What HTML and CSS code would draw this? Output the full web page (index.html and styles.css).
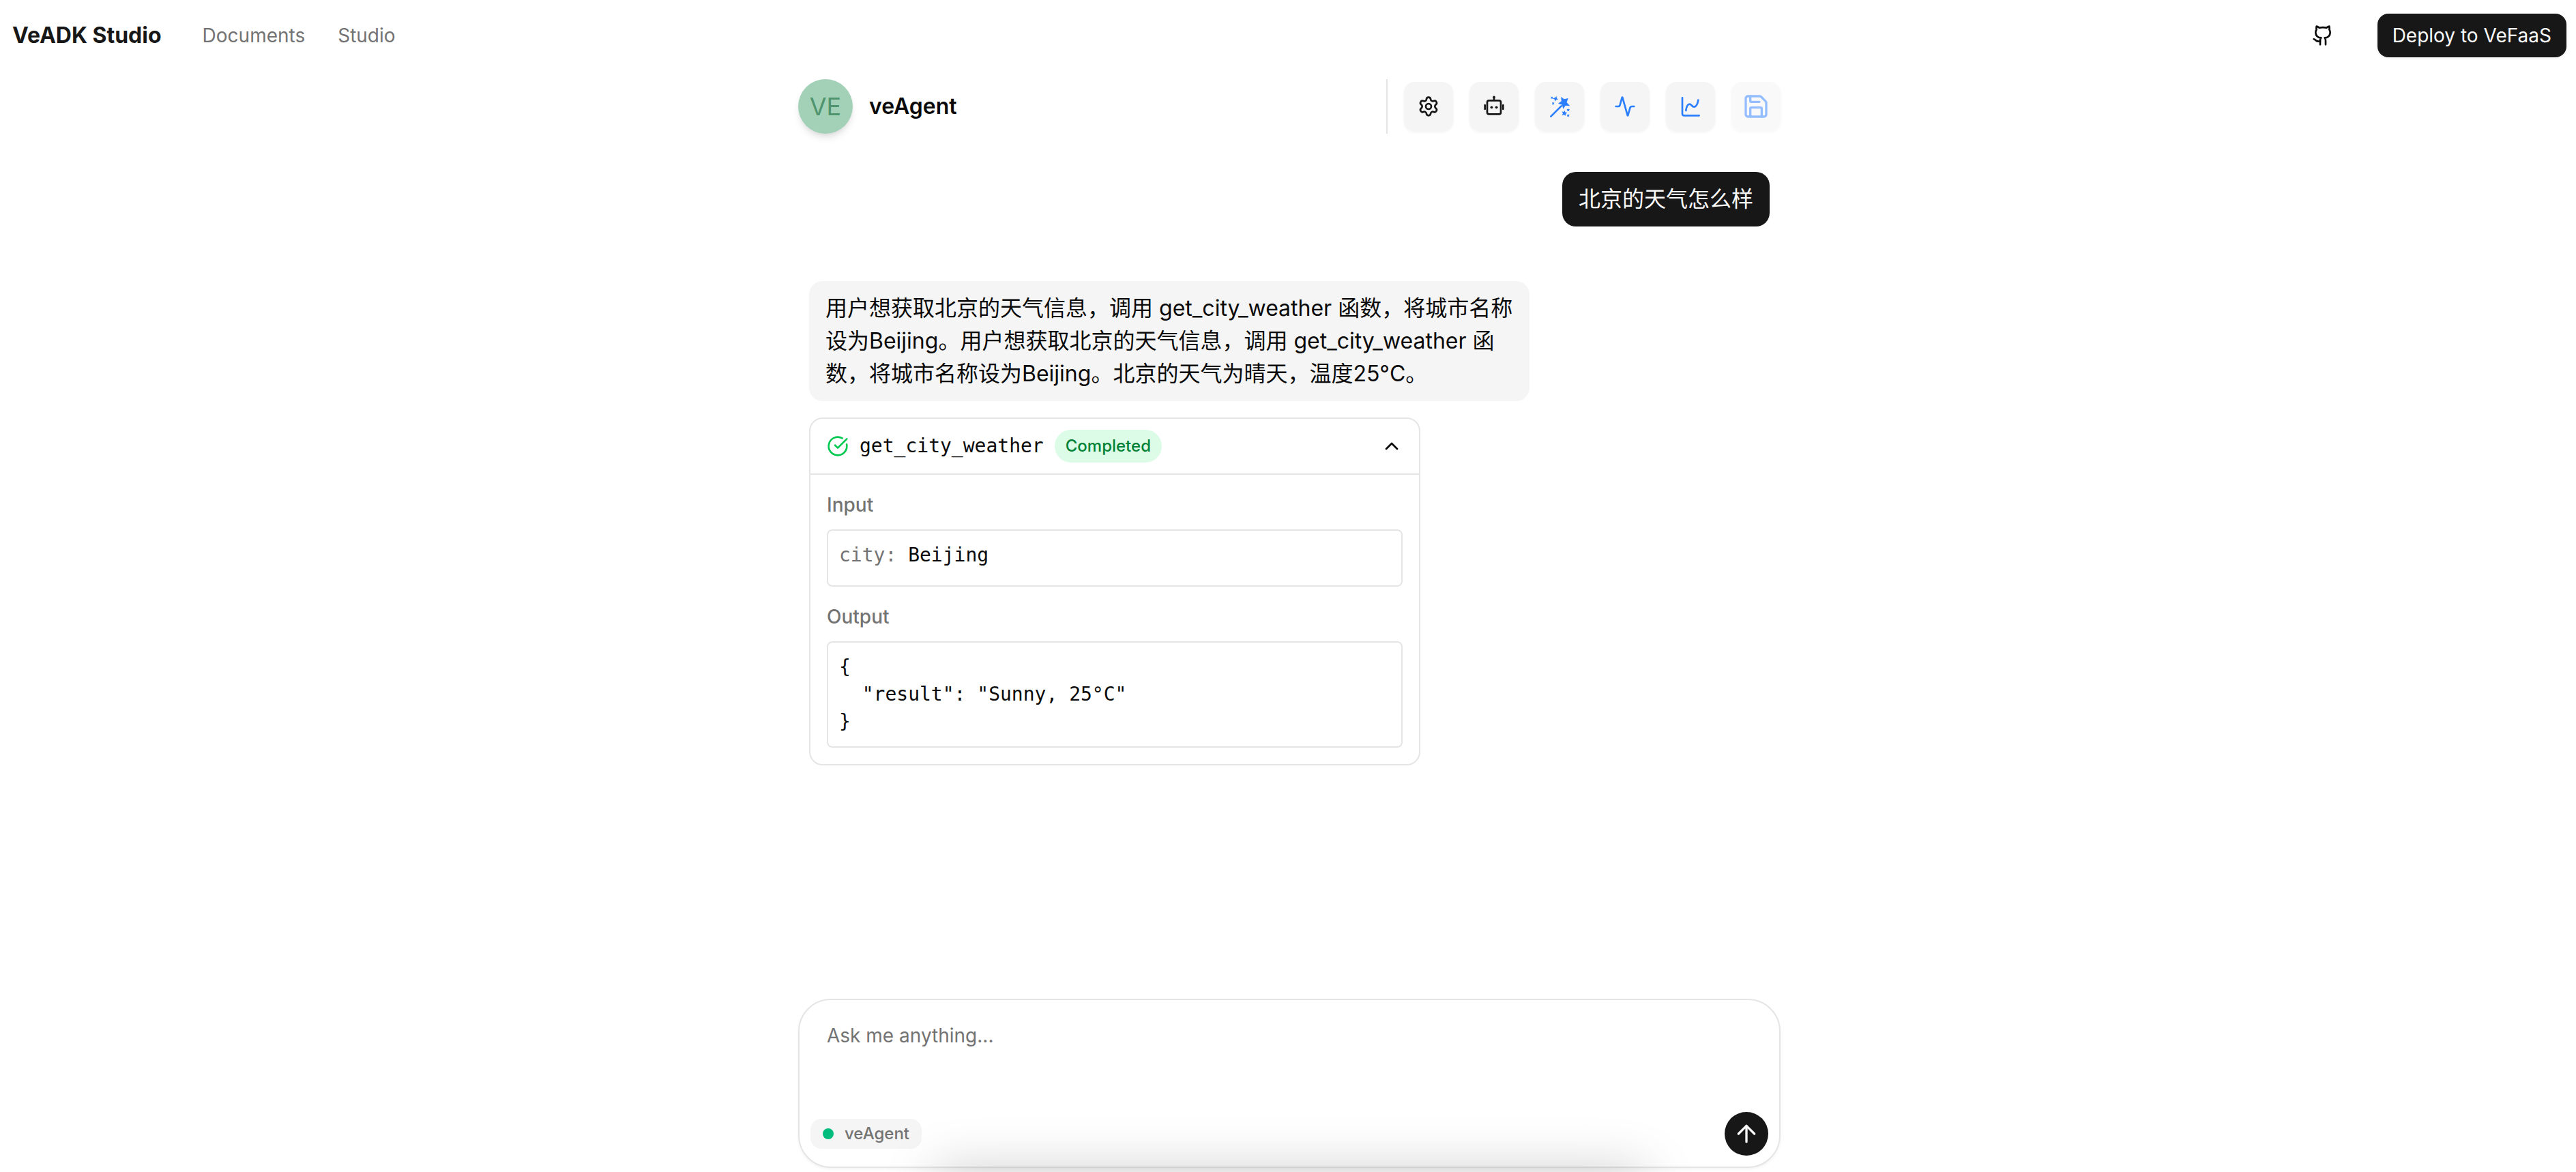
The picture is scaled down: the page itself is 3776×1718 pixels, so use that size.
FILE: index.html
```html
<!DOCTYPE html>
<html lang="zh-CN">
<head>
<meta charset="utf-8">
<meta name="viewport" content="width=device-width, initial-scale=1">
<title>VeADK Studio</title>
<link rel="stylesheet" href="styles.css">
</head>
<body>
<header class="topbar">
  <a class="brand" href="#">VeADK Studio</a>
  <nav class="nav">
    <a href="#">Documents</a>
    <a href="#">Studio</a>
  </nav>
  <div class="topbar-actions">
    <a class="icon-link" href="#" aria-label="GitHub">
      <svg class="icon" viewBox="0 0 24 24"><path d="M15 22v-4a4.800 4.800 0 0 0-1-3.500c3 0 6-2 6-5.500.080-1.250-.270-2.480-1-3.500.280-1.150.280-2.350 0-3.500 0 0-1 0-3 1.500-2.640-.500-5.360-.500-8 0C6 2 5 2 5 2c-.300 1.150-.300 2.350 0 3.500A5.403 5.403 0 0 0 4 9c0 3.500 3 5.500 6 5.500-.390.490-.680 1.050-.850 1.650-.170.600-.220 1.230-.150 1.850v4"/><path d="M9 18c-4.510 2-5-2-7-2"/></svg>
    </a>
    <button class="deploy" type="button">Deploy to VeFaaS</button>
  </div>
</header>

<main class="chat">
  <div class="agent-bar">
    <div class="avatar">VE</div>
    <h1 class="agent-name">veAgent</h1>
    <div class="toolbar">
      <button class="tool" type="button" aria-label="Settings">
        <svg class="icon" viewBox="0 0 24 24"><path d="M9.671 4.136a2.340 2.340 0 0 1 4.659 0 2.340 2.340 0 0 0 3.319 1.915 2.340 2.340 0 0 1 2.330 4.033 2.340 2.340 0 0 0 0 3.831 2.340 2.340 0 0 1-2.330 4.033 2.340 2.340 0 0 0-3.319 1.915 2.340 2.340 0 0 1-4.659 0 2.340 2.340 0 0 0-3.320-1.915 2.340 2.340 0 0 1-2.330-4.033 2.340 2.340 0 0 0 0-3.831A2.340 2.340 0 0 1 6.350 6.051a2.340 2.340 0 0 0 3.319-1.915"/><circle cx="12" cy="12" r="3"/></svg>
      </button>
      <button class="tool" type="button" aria-label="Agent">
        <svg class="icon" viewBox="0 0 24 24"><rect x="4.500" y="5.500" width="15" height="15" rx="2"/><path d="M12 5V2M2 10.500v4.500M22 10.500v4.500"/><circle class="dot" cx="12" cy="1.800" r="1.400"/><circle class="dot" cx="9.300" cy="13" r="1.400"/><circle class="dot" cx="14.700" cy="13" r="1.400"/></svg>
      </button>
      <button class="tool blue" type="button" aria-label="Optimize prompt">
        <svg class="icon" viewBox="0 0 24 24"><path class="wand" d="M2.500 23 14 11.500"/><path class="fill" d="M13.600 1.500 17 4l4.600-1-1.700 4.500L23.500 11.500l-4.900-.5-2.600 3.800-1.200-4.600-4.300-1.400 3.600-2.600z"/><path class="fill" d="m9.300.8-.6 2 1.900 1.500-2.200.3-1.400 1.900-.5-2.300-2-.7 2.200-1zM2.500 1l1.200.7 1.300-.4-.6 1.300.5 1.200-1.300-.6L2.400 4l.5-1.400zM3.800 7.500l1.200.6 1.300-.7-.5 1.300.6 1.200-1.300-.4-1.200.8.3-1.300zM17.800 16.500l.7 2 2.100.4-1.800 1.300v2.200l-1.700-1.300-2.300.6.9-2-1-2 2.100.3zM21.500 14l.6 1.200h1.400l-1 .9.2 1.400-1.200-.7-1.200.5.300-1.200-.8-1 1.300-.1zM21.500 20.200l.5 1 1.200.2-.8.8.2 1.300-1.100-.6-1.100.5.2-1.200-.8-.9 1.300-.2z"/></svg>
      </button>
      <button class="tool blue" type="button" aria-label="Tracing">
        <svg class="icon" viewBox="0 0 24 24"><path d="M22 12h-2.480a2 2 0 0 0-1.930 1.460l-2.350 8.360a.250.250 0 0 1-.480 0L9.240 2.180a.250.250 0 0 0-.480 0l-2.350 8.360A2 2 0 0 1 4.490 12H2"/></svg>
      </button>
      <button class="tool blue" type="button" aria-label="Evaluation">
        <svg class="icon" viewBox="0 0 24 24"><path d="M3 2.500V20a2 2 0 0 0 2 2h16.500"/><path d="M7 16.500c.5-4 2-7 4-7s2.500 3 5 3c2.200 0 4-3.500 4.500-7.500"/></svg>
      </button>
      <button class="tool blue" type="button" aria-label="Save" disabled>
        <svg class="icon icon-lg" viewBox="0 0 24 24"><path d="M15.200 3a2 2 0 0 1 1.400.6l3.800 3.800a2 2 0 0 1 .6 1.400V19a2 2 0 0 1-2 2H5a2 2 0 0 1-2-2V5a2 2 0 0 1 2-2z"/><path d="M17 21v-7a1 1 0 0 0-1-1H8a1 1 0 0 0-1 1v7"/><path d="M7 3v4a1 1 0 0 0 1 1h7"/></svg>
      </button>
    </div>
  </div>

  <section class="messages">
    <p class="bubble user">北京的天气怎么样</p>
    <p class="bubble assistant">用户想获取北京的天气信息，调用 get_city_weather 函数，将城市名称设为Beijing。用户想获取北京的天气信息，调用 get_city_weather 函数，将城市名称设为Beijing。北京的天气为晴天，温度25°C。</p>
    <article class="call">
      <button class="call-head" type="button" aria-expanded="true">
        <svg class="icon ok" viewBox="0 0 24 24"><path d="M21.801 10A10 10 0 1 1 17 3.335"/><path d="m9 11 3 3L22 4"/></svg>
        <span class="call-name">get_city_weather</span>
        <span class="status">Completed</span>
        <svg class="icon chevron" viewBox="0 0 24 24"><path d="m18 15-6-6-6 6"/></svg>
      </button>
      <div class="call-body">
        <div class="field">
          <h2 class="label">Input</h2>
          <div class="box box-input"><span class="key">city:</span> Beijing</div>
        </div>
        <div class="field">
          <h2 class="label">Output</h2>
          <pre class="box">{
  "result": "Sunny, 25°C"
}</pre>
        </div>
      </div>
    </article>
  </section>

  <form class="composer">
    <textarea class="prompt" aria-label="Message" placeholder="Ask me anything..."></textarea>
    <div class="composer-row">
      <span class="agent-pill"><span class="online"></span>veAgent</span>
      <button class="send" type="button" aria-label="Send">
        <svg class="icon icon-lg" viewBox="0 0 24 24"><path d="m5 12 7-7 7 7"/><path d="M12 19V5"/></svg>
      </button>
    </div>
  </form>
</main>
<div class="bottom-shade" aria-hidden="true"></div>
</body>
</html>
```
FILE: styles.css
```css
:root {
  --ink: #0a0a0a;
  --dark: #171717;
  --muted: #737373;
  --line: #e5e5e5;
  --soft: #f5f5f5;
  --blue: #2b7fff;
  --sans: Inter, "Noto Sans CJK SC", sans-serif;
  --mono: "DejaVu Sans Mono", monospace;
}

* { box-sizing: border-box; }

body {
  margin: 0;
  padding-left: 4px;
  min-height: 100vh;
  display: flex;
  flex-direction: column;
  background: #fff;
  color: var(--ink);
  font: 28px/40px var(--sans);
}

button, textarea { font: inherit; color: inherit; border: 0; padding: 0; }
button { display: flex; align-items: center; justify-content: center; }
a { color: inherit; text-decoration: none; }
h1, h2, p, pre { margin: 0; }

.icon {
  width: 32px;
  height: 32px;
  flex: none;
  overflow: visible;
  fill: none;
  stroke: currentColor;
  stroke-width: 2;
  stroke-linecap: round;
  stroke-linejoin: round;
}
.icon-lg { width: 40px; height: 40px; }
.icon .dot, .icon .fill { fill: currentColor; stroke: none; }

/* Top bar */
.topbar {
  display: flex;
  align-items: center;
  padding: 20px 14px;
}
.brand { color: var(--dark); font-size: 32px; font-weight: 700; }
.nav { display: flex; gap: 48px; margin-left: 60px; color: var(--muted); }
.topbar-actions { display: flex; align-items: center; gap: 40px; margin-left: auto; }
.icon-link { display: flex; padding: 16px 24px; margin: -16px 0; }
.deploy {
  height: 64px;
  padding: 0 22px;
  border-radius: 16px;
  background: var(--dark);
  color: #fafafa;
  box-shadow: 0 2px 4px rgba(0, 0, 0, .05);
}

/* Chat column */
.chat {
  flex: 1;
  display: flex;
  flex-direction: column;
  width: 100%;
  max-width: 1440px;
  margin: 0 auto;
  padding: 12px 0 6px;
}
.agent-bar { display: flex; align-items: center; }
.avatar {
  display: flex;
  align-items: center;
  justify-content: center;
  width: 80px;
  height: 80px;
  border-radius: 50%;
  background: #a3d1b7;
  color: #4f946e;
  font-size: 36px;
  font-weight: 400;
  box-shadow: 0 8px 12px -2px rgba(0, 0, 0, .1), 0 4px 8px -4px rgba(0, 0, 0, .1);
}
.agent-name { margin-left: 24px; font-size: 32px; font-weight: 600; }
.toolbar {
  display: flex;
  align-items: center;
  gap: 24px;
  height: 80px;
  margin-left: auto;
  padding-left: 24px;
  border-left: 2px solid var(--line);
}
.tool {
  width: 72px;
  height: 72px;
  border-radius: 16px;
  background: var(--soft);
  color: var(--dark);
  box-shadow: 0 2px 4px rgba(0, 0, 0, .05);
}
.tool.blue { color: var(--blue); }
.tool:disabled { opacity: .5; }

/* Messages */
.messages { flex: 1; display: flex; flex-direction: column; align-items: flex-start; padding: 56px 16px; }
.bubble {
  padding: 16px 24px;
  border-radius: 20px;
  font-size: 32px;
  line-height: 48px;
}
.user { align-self: flex-end; background: var(--dark); color: #fafafa; }
.assistant { max-width: 75%; margin-top: 80px; background: var(--soft); }

.call {
  width: 100%;
  max-width: 896px;
  margin-top: 24px;
  border: 2px solid var(--line);
  border-radius: 20px;
}
.call-head {
  width: 100%;
  gap: 16px;
  justify-content: flex-start;
  padding: 16px 24px;
  background: none;
}
.ok { color: #00c950; }
.call-name { font-family: var(--mono); }
.status {
  padding: 4px 16px;
  border-radius: 24px;
  background: #dcfce7;
  color: #008236;
  font-size: 24px;
  font-weight: 500;
}
.chevron { margin-left: auto; }
.call-body {
  display: flex;
  flex-direction: column;
  gap: 24px;
  padding: 24px;
  border-top: 2px solid var(--line);
}
.field { display: flex; flex-direction: column; gap: 16px; }
.label { color: var(--muted); font-size: 28px; font-weight: 500; }
.box {
  padding: 16px;
  border: 2px solid var(--line);
  border-radius: 8px;
  font-family: var(--mono);
}
.box-input { padding-bottom: 24px; }
.key { color: var(--muted); }

/* Composer */
.composer {
  display: flex;
  flex-direction: column;
  padding: 16px;
  border: 2px solid var(--line);
  border-radius: 48px;
  background: #fff;
  box-shadow: 0 2px 4px rgba(0, 0, 0, .05);
}
.prompt {
  display: block;
  width: 100%;
  height: 148px;
  padding: 16px 24px;
  background: none;
  resize: none;
  outline: none;
}
.prompt::placeholder { color: var(--muted); opacity: 1; }
.composer-row { display: flex; align-items: center; justify-content: space-between; }
.agent-pill {
  display: flex;
  align-items: center;
  gap: 16px;
  padding: 2px 18px;
  border-radius: 16px;
  background: var(--soft);
  color: var(--muted);
  font-size: 24px;
  font-weight: 500;
}
.online { width: 16px; height: 16px; border-radius: 50%; background: #00bc7d; }
.send {
  width: 64px;
  height: 64px;
  border-radius: 50%;
  background: var(--dark);
  color: #fafafa;
}

/* Soft shade that lies over the bottom edge of the window */
.bottom-shade {
  position: fixed;
  left: 50%;
  bottom: -60px;
  width: 1040px;
  height: 60px;
  margin-left: -518px;
  box-shadow: 0 0 80px rgba(0, 0, 0, .22);
  pointer-events: none;
}
```
